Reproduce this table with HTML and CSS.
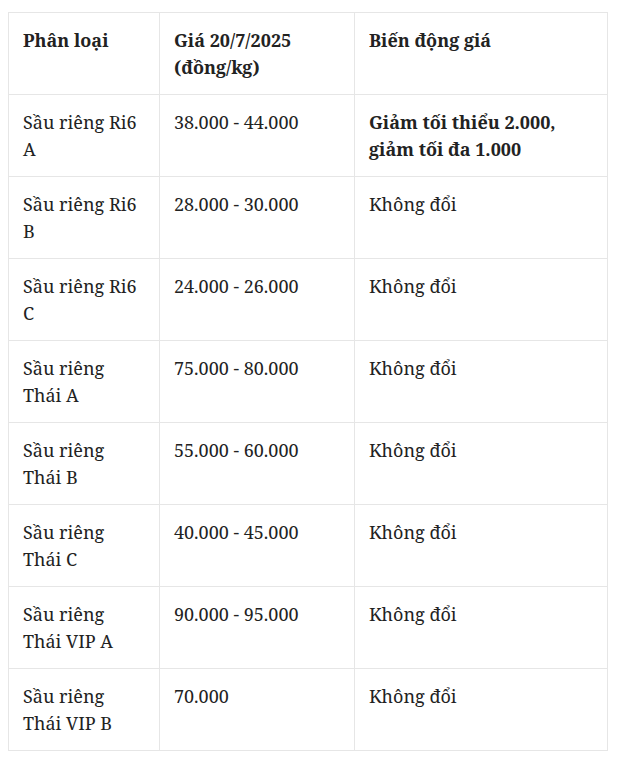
FILE: index.html
```html
<!DOCTYPE html>
<html lang="vi">
<head>
<meta charset="utf-8">
<link rel="stylesheet" href="styles.css">
</head>
<body>
<table class="price-table">
  <colgroup>
    <col class="c1">
    <col class="c2">
    <col class="c3">
  </colgroup>
  <thead>
    <tr>
      <th>Phân loại</th>
      <th>Giá 20/7/2025 (đồng/kg)</th>
      <th>Biến động giá</th>
    </tr>
  </thead>
  <tbody>
    <tr><td>Sầu riêng Ri6 A</td><td>38.000 - 44.000</td><td class="strong">Giảm tối thiểu 2.000, giảm tối đa 1.000</td></tr>
    <tr><td>Sầu riêng Ri6 B</td><td>28.000 - 30.000</td><td>Không đổi</td></tr>
    <tr><td>Sầu riêng Ri6 C</td><td>24.000 - 26.000</td><td>Không đổi</td></tr>
    <tr><td>Sầu riêng Thái A</td><td>75.000 - 80.000</td><td>Không đổi</td></tr>
    <tr><td>Sầu riêng Thái B</td><td>55.000 - 60.000</td><td>Không đổi</td></tr>
    <tr><td>Sầu riêng Thái C</td><td>40.000 - 45.000</td><td>Không đổi</td></tr>
    <tr><td>Sầu riêng Thái VIP A</td><td>90.000 - 95.000</td><td>Không đổi</td></tr>
    <tr><td>Sầu riêng Thái VIP B</td><td>70.000</td><td>Không đổi</td></tr>
  </tbody>
</table>
</body>
</html>
```

FILE: styles.css
```css
html, body {
  background: #ffffff;
}
body {
  margin: 12px 8px;
  font-family: "Noto Serif", "DejaVu Serif", serif;
  color: #222222;
}
.price-table {
  width: 599px;
  table-layout: fixed;
  border-collapse: collapse;
  border: 1px solid #e6e6e6;
  font-size: 18px;
  line-height: 27px;
}
.c1 { width: 151px; }
.c2 { width: 195px; }
.c3 { width: 253px; }
.price-table th,
.price-table td {
  border: 1px solid #e6e6e6;
  padding: 14px 14px 13px 14px;
  text-align: left;
  vertical-align: top;
  height: 54px;
}
.price-table th {
  font-weight: bold;
}
.price-table td.strong {
  font-weight: bold;
}
```
